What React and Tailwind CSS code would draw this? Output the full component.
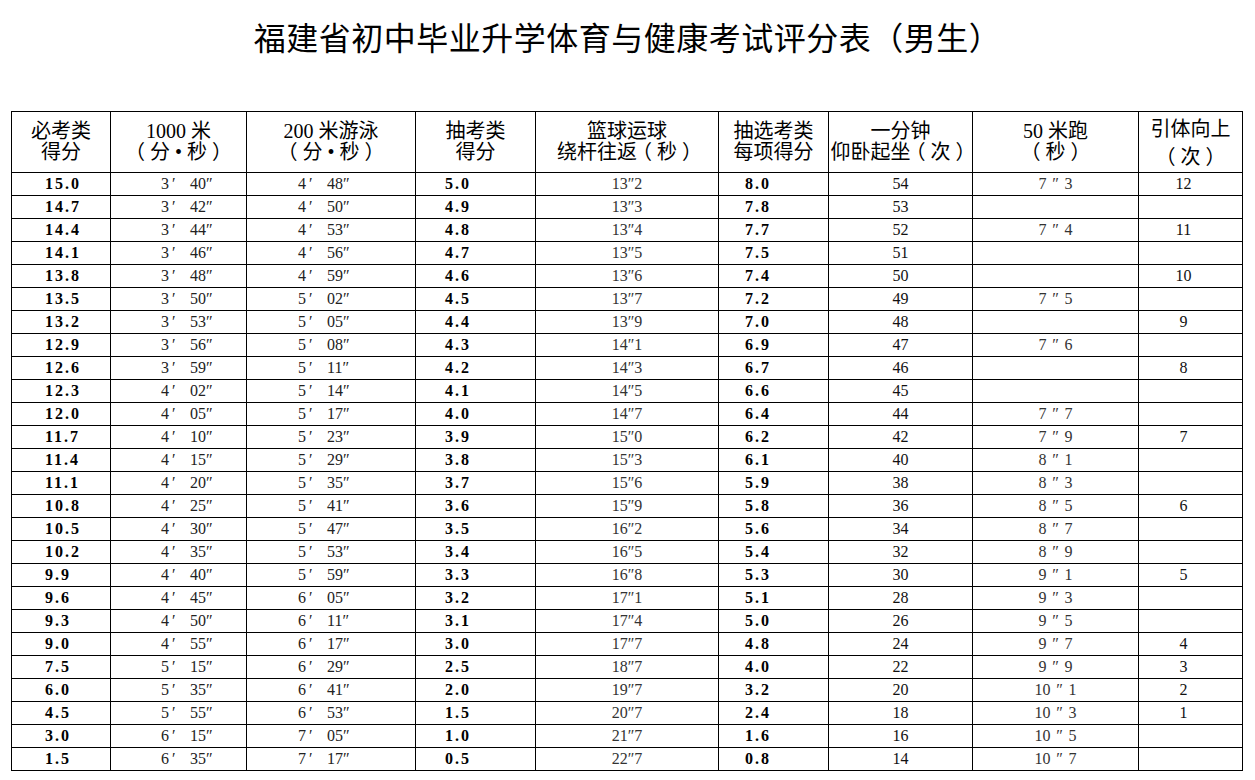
import React from "react";

const rows = [
  ["15.0", "3|40", "4|48", "5.0", "13|2", "8.0", "54", "7|3", "12"],
  ["14.7", "3|42", "4|50", "4.9", "13|3", "7.8", "53", "", ""],
  ["14.4", "3|44", "4|53", "4.8", "13|4", "7.7", "52", "7|4", "11"],
  ["14.1", "3|46", "4|56", "4.7", "13|5", "7.5", "51", "", ""],
  ["13.8", "3|48", "4|59", "4.6", "13|6", "7.4", "50", "", "10"],
  ["13.5", "3|50", "5|02", "4.5", "13|7", "7.2", "49", "7|5", ""],
  ["13.2", "3|53", "5|05", "4.4", "13|9", "7.0", "48", "", "9"],
  ["12.9", "3|56", "5|08", "4.3", "14|1", "6.9", "47", "7|6", ""],
  ["12.6", "3|59", "5|11", "4.2", "14|3", "6.7", "46", "", "8"],
  ["12.3", "4|02", "5|14", "4.1", "14|5", "6.6", "45", "", ""],
  ["12.0", "4|05", "5|17", "4.0", "14|7", "6.4", "44", "7|7", ""],
  ["11.7", "4|10", "5|23", "3.9", "15|0", "6.2", "42", "7|9", "7"],
  ["11.4", "4|15", "5|29", "3.8", "15|3", "6.1", "40", "8|1", ""],
  ["11.1", "4|20", "5|35", "3.7", "15|6", "5.9", "38", "8|3", ""],
  ["10.8", "4|25", "5|41", "3.6", "15|9", "5.8", "36", "8|5", "6"],
  ["10.5", "4|30", "5|47", "3.5", "16|2", "5.6", "34", "8|7", ""],
  ["10.2", "4|35", "5|53", "3.4", "16|5", "5.4", "32", "8|9", ""],
  ["9.9", "4|40", "5|59", "3.3", "16|8", "5.3", "30", "9|1", "5"],
  ["9.6", "4|45", "6|05", "3.2", "17|1", "5.1", "28", "9|3", ""],
  ["9.3", "4|50", "6|11", "3.1", "17|4", "5.0", "26", "9|5", ""],
  ["9.0", "4|55", "6|17", "3.0", "17|7", "4.8", "24", "9|7", "4"],
  ["7.5", "5|15", "6|29", "2.5", "18|7", "4.0", "22", "9|9", "3"],
  ["6.0", "5|35", "6|41", "2.0", "19|7", "3.2", "20", "10|1", "2"],
  ["4.5", "5|55", "6|53", "1.5", "20|7", "2.4", "18", "10|3", "1"],
  ["3.0", "6|15", "7|05", "1.0", "21|7", "1.6", "16", "10|5", ""],
  ["1.5", "6|35", "7|17", "0.5", "22|7", "0.8", "14", "10|7", ""],
];

const serif = { fontFamily: '"Liberation Serif", "Noto Sans CJK SC", serif' };

function MinSec({ v }) {
  const [m, s] = v.split("|");
  return (
    <span className="whitespace-pre">
      {m}
      <span className="inline-block w-[21px] text-left pl-[3px]">′</span>
      {s}″
    </span>
  );
}

function Sec({ v }) {
  const [a, b] = v.split("|");
  return (
    <span className="whitespace-pre">
      {a}″{b}
    </span>
  );
}

function Run({ v }) {
  if (!v) return null;
  const [a, b] = v.split("|");
  return (
    <span className="whitespace-pre">
      {a}
      <span className="inline-block w-[18px] text-center">″</span>
      {b}
    </span>
  );
}

const L = () => (
  <span className="inline-block w-[20px] text-center [font-feature-settings:'halt']">（</span>
);
const R = () => (
  <span className="inline-block w-[20px] text-center [font-feature-settings:'halt']">）</span>
);

const headers = [
  ["必考类", "得分"],
  ["1000 米", <><L />分 • 秒<R /></>],
  ["200 米游泳", <><L />分 • 秒<R /></>],
  ["抽考类", "得分"],
  ["篮球运球", <>绕杆往返<L />秒<R /></>],
  ["抽选考类", "每项得分"],
  ["一分钟", <>仰卧起坐<L />次<R /></>],
  ["50 米跑", <><L />秒<R /></>],
  ["引体向上", <><L />次<R /></>],
];

export default function App() {
  return (
    <div className="w-[1255px] h-[780px] bg-white text-black overflow-hidden">
      <div
        className="h-[111px] pt-[16px] text-center text-[32px] leading-[40px] font-normal tracking-[0.5px]"
        style={{ fontFamily: '"Noto Sans CJK SC", sans-serif' }}
      >
        福建省初中毕业升学体育与健康考试评分表（男生）
      </div>
      <table
        className="ml-[11px] w-[1231px] table-fixed border-collapse"
        style={serif}
      >
        <colgroup>
          <col className="w-[99px]" />
          <col className="w-[136px]" />
          <col className="w-[169px]" />
          <col className="w-[120px]" />
          <col className="w-[183px]" />
          <col className="w-[110px]" />
          <col className="w-[144px]" />
          <col className="w-[166px]" />
          <col className="w-[104px]" />
        </colgroup>
        <thead>
          <tr className="h-[61px]">
            {headers.map((h, i) => (
              <th
                key={i}
                className={
                  "border border-black p-0 text-center font-normal text-[20px] whitespace-nowrap " +
                  (i === 8 ? "leading-[28px] align-top pt-[3px]" : "leading-[21px] align-middle")
                }
              >
                <div>{h[0]}</div>
                <div>{h[1]}</div>
              </th>
            ))}
          </tr>
        </thead>
        <tbody>
          {rows.map((r, ri) => (
            <tr key={ri} className="h-[23px]">
              <td className="border border-black p-0 pl-[33px] text-left text-[16px] leading-[20px] font-bold tracking-[2px]">
                {r[0]}
              </td>
              <td className="border border-black p-0 pl-[50px] text-left text-[16px] leading-[20px] text-[#222]">
                <MinSec v={r[1]} />
              </td>
              <td className="border border-black p-0 pl-[51px] text-left text-[16px] leading-[20px] text-[#222]">
                <MinSec v={r[2]} />
              </td>
              <td className="border border-black p-0 pl-[29px] text-left text-[16px] leading-[20px] font-bold tracking-[2px]">
                {r[3]}
              </td>
              <td className="border border-black p-0 text-center text-[16px] leading-[20px] text-[#333]">
                <Sec v={r[4]} />
              </td>
              <td className="border border-black p-0 pl-[26px] text-left text-[16px] leading-[20px] font-bold tracking-[2px]">
                {r[5]}
              </td>
              <td className="border border-black p-0 text-center text-[16px] leading-[20px] text-[#111]">
                {r[6]}
              </td>
              <td className="border border-black p-0 text-center text-[16px] leading-[20px] text-[#333]">
                <Run v={r[7]} />
              </td>
              <td className="border border-black p-0 pr-[14px] text-center text-[16px] leading-[20px] text-[#111]">
                {r[8]}
              </td>
            </tr>
          ))}
        </tbody>
      </table>
    </div>
  );
}
